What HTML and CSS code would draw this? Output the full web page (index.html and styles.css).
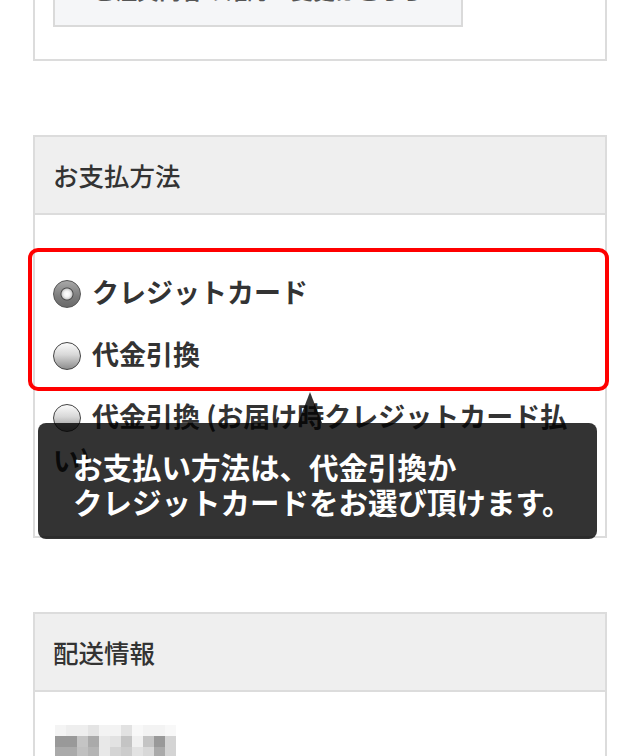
FILE: index.html
```html
<!DOCTYPE html>
<html lang="ja">
<head>
<meta charset="utf-8">
<link rel="stylesheet" href="styles.css">
</head>
<body>
<div class="page">
  <section class="card card-top">
    <div class="sub-button">ご注文内容の確認・変更はこちら</div>
  </section>

  <section class="card payment">
    <h2 class="card-head">お支払方法</h2>
    <div class="card-body options">
      <label class="option"><span class="radio checked"></span>クレジットカード</label>
      <label class="option"><span class="radio"></span>代金引換</label>
      <label class="option"><span class="radio"></span>代金引換 (お届け時クレジットカード払い)</label>
    </div>
    <div class="highlight"></div>
    <div class="tooltip">
      <span class="tip-arrow"></span>
      <p class="tip-text">お支払い方法は、代金引換か<br>クレジットカードをお選び頂けます。</p>
    </div>
  </section>

  <section class="card">
    <h2 class="card-head">配送情報</h2>
    <div class="card-body shipping">
      <div class="mosaic">
        <i class="a1"></i><i class="a2"></i><i class="a2"></i><i class="a3"></i><i class="a4"></i><i class="a4"></i><i class="a5"></i><i class="a6"></i><i class="a4"></i><i class="a4"></i><i class="a6"></i>
        <i class="b1"></i><i class="b1"></i><i class="b2"></i><i class="b3"></i><i class="b4"></i><i class="b5"></i><i class="b2"></i><i class="b6"></i><i class="b2"></i><i class="b1"></i><i class="b7"></i>
        <i class="c1"></i><i class="c1"></i><i class="c2"></i><i class="c3"></i><i class="b4"></i><i class="b7"></i><i class="c4"></i><i class="b5"></i><i class="c5"></i><i class="c1"></i><i class="b7"></i>
      </div>
    </div>
  </section>
</div>
</body>
</html>
```

FILE: styles.css
```css
* { box-sizing: border-box; }
html, body { margin: 0; padding: 0; background: #fff; }
body {
  font-family: "Noto Sans CJK JP", "Noto Sans", sans-serif;
  color: #333;
  overflow: hidden;
  height: 756px;
}
.page {
  margin: -55px 33px 0;
}
.card {
  border: 2px solid #dcdcdc;
  background: #fff;
  margin-bottom: 74px;
}
.card-top {
  padding: 20px 18px 32px;
}
.sub-button {
  width: 410px;
  height: 60px;
  border: 2px solid #dadada;
  background: #f5f6f8;
  padding: 7px 0 23px;
  text-align: center;
  font-size: 22px;
  line-height: 26px;
  font-weight: 700;
  color: #555;
}
.card-head {
  margin: 0;
  height: 78px;
  background: #efefef;
  border-bottom: 2px solid #dcdcdc;
  padding: 0 18px;
  font-size: 25.5px;
  font-weight: 500;
  line-height: 76px;
  color: #333;
}
.payment { position: relative; }
.options {
  padding: 55px 18px 54px;
}
.option {
  display: block;
  font-size: 27px;
  font-weight: 700;
  line-height: 44px;
  color: #333;
  margin-bottom: 18px;
}
.option:last-child { margin-bottom: 0; }
.radio {
  display: inline-block;
  width: 28px;
  height: 28px;
  border-radius: 50%;
  border: 1.5px solid #444;
  background: linear-gradient(#fbfbfb, #d8d8d8 45%, #8e8e8e);
  vertical-align: -5px;
  margin-right: 11px;
}
.radio.checked {
  border-color: #555;
  background:
    radial-gradient(circle at 50% 50%, #ffffff 0, #f2f2f2 3px, #cfcfcf 5px, #4a4a4a 6px, rgba(0,0,0,0) 7px),
    linear-gradient(#a8a8a8, #7c7c7c 60%, #6a6a6a);
}
.highlight {
  position: absolute;
  left: -7px;
  top: 111px;
  width: 581px;
  height: 143px;
  border: 4px solid #ff0000;
  border-radius: 10px;
}
.tooltip {
  position: absolute;
  left: 3px;
  top: 286px;
  width: 559px;
  height: 116px;
  background: rgba(0, 0, 0, 0.8);
  border-radius: 8px;
  padding: 26px 10px 20px 35px;
}
.tip-arrow {
  position: absolute;
  left: 260px;
  top: -31px;
  width: 0;
  height: 0;
  border-left: 12px solid transparent;
  border-right: 12px solid transparent;
  border-bottom: 31px solid rgba(0, 0, 0, 0.8);
}
.tip-text {
  margin: 0;
  color: #fff;
  font-size: 29.5px;
  font-weight: 700;
  line-height: 35px;
  white-space: nowrap;
}
.shipping {
  padding: 33px 18px 40px 20px;
}
.mosaic {
  display: grid;
  grid-template-columns: repeat(11, 11px);
  grid-auto-rows: 11px;
}
.mosaic i { display: block; }
.a1 { background: #f4f4f4; }
.a2 { background: #eeeeee; }
.a3 { background: #e4e4e4; }
.a4 { background: #f3f3f3; }
.a5 { background: #e2e2e2; }
.a6 { background: #f8f8f8; }
.b1 { background: #999999; }
.b2 { background: #c4c4c4; }
.b3 { background: #aaaaaa; }
.b4 { background: #e8e8e8; }
.b5 { background: #e2e2e2; }
.b6 { background: #f0f0f0; }
.b7 { background: #d4d4d4; }
.c1 { background: #aaaaaa; }
.c2 { background: #c0c0c0; }
.c3 { background: #b4b4b4; }
.c4 { background: #cccccc; }
.c5 { background: #d8d8d8; }
```
